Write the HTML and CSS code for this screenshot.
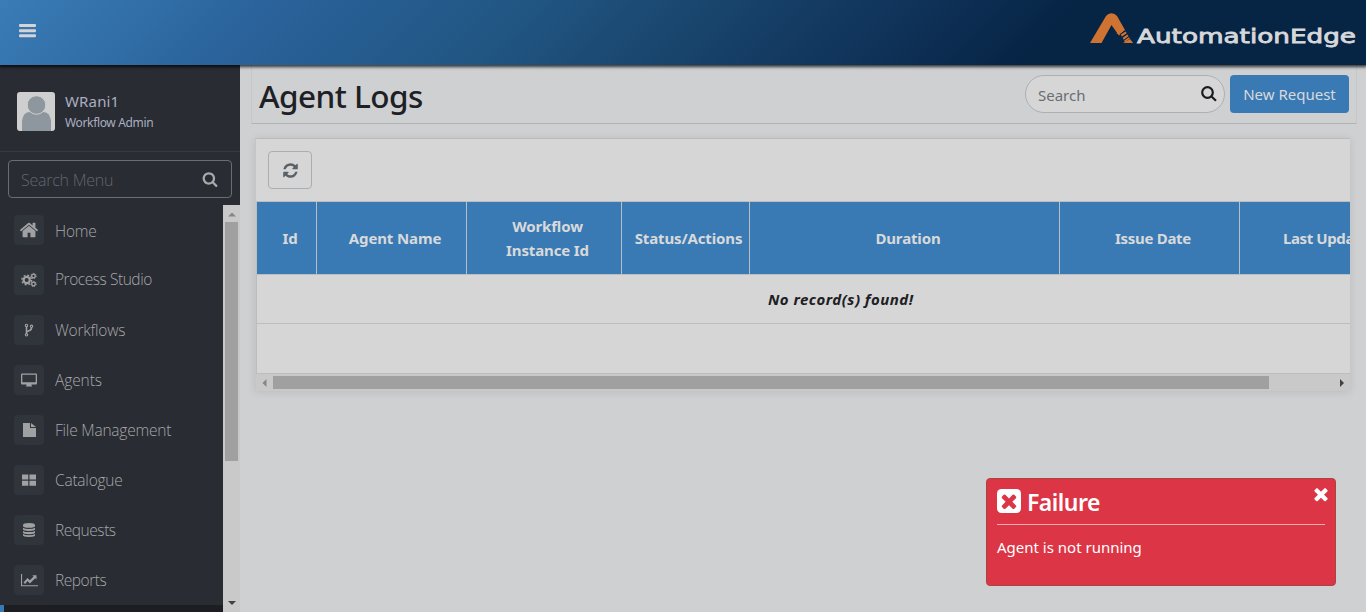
FILE: index.html
```html
<!DOCTYPE html>
<html lang="en">
<head>
<meta charset="utf-8">
<title>Agent Logs</title>
<link rel="stylesheet" href="styles.css">
</head>
<body>
<svg class="defs" width="0" height="0">
  <symbol id="search" viewBox="0 0 1792 1792"><path d="M1216 832q0-185-131.500-316.500t-316.500-131.500-316.500 131.500-131.500 316.500 131.500 316.500 316.500 131.500 316.500-131.500 131.500-316.500zm512 832q0 52-38 90t-90 38q-54 0-90-38l-343-342q-179 124-399 124-143 0-273.500-55.500t-225-150-150-225-55.500-273.500 55.500-273.500 150-225 225-150 273.500-55.500 273.500 55.500 225 150 150 225 55.500 273.500q0 220-124 399l343 343q37 37 37 90z"/></symbol>
  <symbol id="times" viewBox="0 0 1792 1792"><path d="M1490 1322q0 40-28 68l-136 136q-28 28-68 28t-68-28l-294-294-294 294q-28 28-68 28t-68-28l-136-136q-28-28-28-68t28-68l294-294-294-294q-28-28-28-68t28-68l136-136q28-28 68-28t68 28l294 294 294-294q28-28 68-28t68 28l136 136q28 28 28 68t-28 68l-294 294 294 294q28 28 28 68z"/></symbol>
</svg>
<header class="topbar">
  <svg class="bars" width="17" height="14" viewBox="0 0 17 14"><path d="M1 0h15q1 0 1 1v1q0 1-1 1H1q-1 0-1-1V1q0-1 1-1zM1 5.200h15q1 0 1 1v1q0 1-1 1H1q-1 0-1-1v-1q0-1 1-1zM1 10.200h15q1 0 1 1v1q0 1-1 1H1q-1 0-1-1v-1q0-1 1-1z"/></svg>
  <svg class="logo" width="268" height="38" viewBox="0 0 268 38">
    <path class="mark" d="M0 33 16 6Q18 3.200 21.500 3.200T27 6L35 20 30.800 23.500 30 27 21.500 15 11.500 33zM0 33M35 20 31 23.500 26 24z"/>
    <path class="gap" d="m29 25.500 1.800-2L36 20v14H29z"/>
    <path class="mark" d="m30.800 24.600 4.800-3.200 1.100 1.800-4.800 3.300zM32.700 27.700l4.700-3.300 1.100 1.900-4.800 3.500zM34.200 30.600l4.800-3.400.9 1.400L34.800 32zM33 33l7-4 3.200 4z"/>
    <text class="brand" x="47" y="33" textLength="219" lengthAdjust="spacingAndGlyphs">AutomationEdge</text>
  </svg>
</header>
<div class="shell">
  <aside class="sidebar">
    <div class="profile">
      <svg width="38" height="39" viewBox="0 0 38 39"><rect class="avatar-bg" width="38" height="39" rx="3"/><path class="avatar" d="M5 39V29Q6 20 13 20h13q7 0 8 9v10z"/><circle class="avatar ring" cx="19.500" cy="13" r="9.300"/></svg>
      <div class="who"><div class="name"><span>WRani1</span></div><div class="role"><span>Workflow Admin</span></div></div>
    </div>
    <div class="menu-search"><span>Search Menu</span><svg width="16" height="16"><use href="#search"/></svg></div>
    <div class="menu-wrap">
      <nav class="menu">
        <a class="item home"><i class="tile"><svg width="20" height="20" viewBox="0 0 1792 1792"><path d="M1472 992v480q0 26-19 45t-45 19h-384v-384h-256v384h-384q-26 0-45-19t-19-45v-480q0-1 .5-3t.5-3l575-474 575 474q1 2 1 6zm223-69l-62 74q-8 9-21 11h-3q-13 0-21-7l-692-577-692 577q-12 8-24 7-13-2-21-11l-62-74q-8-10-7-23.500t11-21.500l719-599q32-26 76-26t76 26l244 204v-195q0-14 9-23t23-9h192q14 0 23 9t9 23v408l219 182q10 8 11 21.500t-7 23.500z"/></svg></i><span>Home</span></a>
        <a class="item studio"><i class="tile"><svg width="16" height="16" viewBox="0 0 16 16"><g class="line"><circle cx="5.700" cy="8" r="3.100" stroke-width="2.200"/><circle cx="5.700" cy="8" r="4.800" stroke-width="1.500" stroke-dasharray="1.900 1.870"/><circle cx="12.500" cy="4" r="1.800" stroke-width="1.300"/><circle cx="12.500" cy="4" r="2.700" stroke-width="1" stroke-dasharray="1.300 1.127"/><circle cx="12.500" cy="12" r="1.800" stroke-width="1.300"/><circle cx="12.500" cy="12" r="2.700" stroke-width="1" stroke-dasharray="1.300 1.127"/></g></svg></i><span>Process Studio</span></a>
        <a class="item"><i class="tile"><svg width="16" height="16" viewBox="0 0 16 16"><g class="line"><circle cx="5.500" cy="3.400" r="1.200" stroke-width="1.100"/><circle cx="5.500" cy="12.800" r="1.200" stroke-width="1.100"/><circle cx="10.500" cy="4.300" r="1.200" stroke-width="1.100"/><path stroke-width="1.600" d="M5.500 4.600v7M10.500 5.500Q10.700 8 8 8.700 5.500 9.300 5.500 11"/></g></svg></i><span>Workflows</span></a>
        <a class="item agents"><i class="tile"><svg width="16" height="16" viewBox="0 0 16 16"><path fill-rule="evenodd" d="M1 1.500h14q1 0 1 1v9q0 1-1 1h-4.500v1.200h.5v.8H5v-.8h.500v-1.200H1q-1 0-1-1v-9q0-1 1-1zm.3 1.200v7.500h13.400V2.700z"/></svg></i><span>Agents</span></a>
        <a class="item"><i class="tile"><svg width="16" height="16" viewBox="0 0 16 16"><path d="M2 1h7v5h6v9H2zM10 1l5 4h-5z"/></svg></i><span>File Management</span></a>
        <a class="item"><i class="tile"><svg width="16" height="16" viewBox="0 0 16 16"><path d="M1 2.500h6.300v5H1zM8.500 2.500H15v5H8.500zM1 8.700h6.300v5H1zM8.500 8.700H15v5H8.500z"/></svg></i><span>Catalogue</span></a>
        <a class="item tight"><i class="tile"><svg width="16" height="16" viewBox="0 0 16 16"><path d="M2 3q0-2 6-2t6 2v1q0 1.800-6 1.800T2 4zM2 5.700q1.500 1.200 6 1.200t6-1.200v1.600q0 1.700-6 1.700T2 7.300zM2 8.900q1.500 1.200 6 1.200t6-1.200v1.600q0 1.700-6 1.700t-6-1.700zM2 12.100q1.500 1.200 6 1.200t6-1.200v1.200Q14 15 8 15t-6-1.700z"/></svg></i><span>Requests</span></a>
        <a class="item tight"><i class="tile"><svg width="17" height="16" viewBox="0 0 17 16"><path d="M0 2h1.100v11.200H17v1.100H0zM2.500 10.500 6.500 6l2.400 2.300 3.700-3.700L11.300 3.300H15.500v4.200l-1.300-1.300-5.300 5.200-2.300-2.300-2.500 3z"/></svg></i><span>Reports</span></a>
        <div class="next"></div>
      </nav>
      <div class="vscroll"><svg width="8" height="5" viewBox="0 0 8 5"><path class="dim" d="M0 4.500 4 .5l4 4z"/></svg><div class="vthumb"></div><svg class="down" width="8" height="5" viewBox="0 0 8 5"><path class="dark" d="M0 0h8L4 4z"/></svg></div>
    </div>
  </aside>
  <main class="content">
    <div class="heading">
      <h1><span>Agent Logs</span></h1>
      <div class="search"><span>Search</span><svg width="16" height="16" viewBox="0 0 16 16"><circle cx="6.500" cy="6.500" r="5.300"/><path d="m10.500 10.500 4.500 4.300"/></svg></div>
      <div class="new"><span>New Request</span></div>
    </div>
    <section class="card">
      <div class="tools"><div class="refresh"><svg width="17" height="17" viewBox="0 0 1792 1792"><path d="M1639 1056q0 5-1 7-64 268-268 434.500t-478 166.500q-146 0-282.500-55t-243.500-157l-129 129q-19 19-45 19t-45-19-19-45v-448q0-26 19-45t45-19h448q26 0 45 19t19 45-19 45l-137 137q71 66 161 102t187 36q134 0 250-65t186-179q11-17 53-117 8-23 30-23h192q13 0 22.500 9.500t9.500 22.500zm25-800v448q0 26-19 45t-45 19h-448q-26 0-45-19t-19-45 19-45l138-138q-148-137-349-137-134 0-250 65t-186 179q-11 17-53 117-8 23-30 23h-199q-13 0-22.500-9.500t-9.500-22.500v-7q65-268 270-434.500t480-166.500q146 0 284 55.500t245 156.500l130-129q19-19 45-19t45 19 19 45z"/></svg></div></div>
      <div class="grid">
        <div class="cols">
          <div class="th"><span>Id</span></div><div class="th"><span>Agent Name</span></div><div class="th"><span>Workflow</span><span>Instance Id</span></div><div class="th"><span>Status/Actions</span></div><div class="th"><span>Duration</span></div><div class="th"><span>Issue Date</span></div><div class="th last"><span>Last Updated</span></div>
        </div>
        <div class="empty"><span>No record(s) found!</span></div>
        <div class="blank"></div>
      </div>
      <div class="hscroll"><svg width="5" height="8" viewBox="0 0 5 8"><path class="dim" d="M4.500 0v8l-4-4z"/></svg><div class="hthumb"></div><svg class="right" width="5" height="8" viewBox="0 0 5 8"><path class="dark" d="M0 0v8l4-4z"/></svg></div>
    </section>
  </main>
</div>
<div class="toast">
  <div class="toast-head"><svg width="24" height="24" viewBox="0 0 24 24"><rect width="24" height="24" rx="4.500" fill="#fff"/><svg class="x" x="1" y="1" width="22" height="22"><use href="#times"/></svg></svg><span>Failure</span></div>
  <svg class="close" width="20" height="20"><use href="#times"/></svg>
  <p><span>Agent is not running</span></p>
</div>
</body>
</html>
```
FILE: styles.css
```css
* { box-sizing: border-box; }
body { margin: 0; width: 1366px; height: 612px; overflow: hidden; background: #cfd0d2; font-family: "Noto Sans", "Open Sans", sans-serif; font-size: 15px; color: #1d2024; display: flex; flex-direction: column; }
svg { display: block; flex: none; }
span { white-space: nowrap; }
.defs { position: absolute; }
.topbar { height: 65px; flex: none; position: relative; z-index: 2; background: linear-gradient(135deg, #3a7cb6 0%, #2a629a 20%, #215683 37%, #19456d 50%, #10335a 64%, #062444 76%, #062444 100%); box-shadow: 0 1px 3px 1px rgba(0,0,0,.75); display: flex; justify-content: space-between; align-items: flex-start; padding: 10px 8px 0 19px; }
.bars { fill: #d4d4d6; margin-top: 14px; }
.mark { fill: #cf7333; }
.gap { fill: #062444; }
.brand { fill: #d7d8da; font: 19px "DejaVu Sans", sans-serif; stroke: #d7d8da; stroke-width: .8px; }
.shell { display: flex; flex: 1; min-height: 0; }
.sidebar { width: 240px; background: #292c33; display: flex; flex-direction: column; flex: none; }
.profile { height: 87px; flex: none; border-bottom: 1px solid #363940; padding: 26px 17px 0; display: flex; gap: 10px; color: #a9afc0; }
.profile svg { margin-top: 1px; }
.avatar-bg { fill: #cfcfcf; }
.avatar { fill: #8f979e; }
.ring { stroke: #cfcfcf; stroke-width: 1; }
.name { font-size: 15px; line-height: 20px; letter-spacing: .15px; }
.role { font-size: 12px; line-height: 24px; letter-spacing: -.35px; }
.menu-search { height: 38px; flex: none; margin: 8px 8px 7px; border: 1px solid #6b6d70; border-radius: 4px; display: flex; align-items: center; justify-content: space-between; padding: 0 13px 0 12px; color: #62676b; font: 300 16px "Open Sans", sans-serif; letter-spacing: -.25px; }
.menu-search span { padding-top: 2px; }
.menu-search svg { fill: #a9a9aa; }
.menu-wrap { flex: 1; display: flex; min-height: 0; }
.menu { flex: 1; padding-top: 10px; overflow: hidden; font: 300 15.500px/30px "Open Sans", sans-serif; letter-spacing: -.22px; color: #a6a7a9; }
.item { height: 30px; margin-bottom: 20px; padding-left: 14px; display: flex; gap: 11px; }
.home span { padding-top: 1px; }
.studio { letter-spacing: -.45px; }
.studio span { margin-top: -1px; }
.agents { letter-spacing: -.1px; }
.tight { letter-spacing: -.45px; }
.tile { width: 30px; height: 30px; border-radius: 4px; background: #30343b; display: flex; align-items: center; justify-content: center; fill: #a0a1a3; }
.line { fill: none; stroke: #a0a1a3; }
.next { height: 10px; margin-top: -10px; background: #1c1e21; border-left: 4px solid #3a7ab4; }
.vscroll { width: 17px; background: #c9c9c9; padding-top: 7px; display: flex; flex-direction: column; align-items: center; }
.vthumb { width: 13px; height: 239px; margin-top: 5px; background: #a0a0a0; }
.down { margin-top: auto; margin-bottom: 6px; }
.dim { fill: #878787; }
.dark { fill: #414141; }
.content { flex: 1; min-width: 0; padding: 0 9px 0 11px; }
.heading { height: 59px; border-left: 1px solid #c6c7c9; border-right: 1px solid #c6c7c9; border-bottom: 1px solid #b0b3b6; display: flex; align-items: flex-start; padding: 10px 7px 0; }
h1 { margin: 0; flex: 1; font-weight: 500; font-size: 31.500px; line-height: 42px; letter-spacing: -.55px; }
.search { width: 200px; height: 38px; border: 1px solid #abb0b5; border-radius: 19px; background: #d6d6d6; display: flex; align-items: center; justify-content: space-between; padding: 0 7px 0 12px; margin-right: 5px; color: #686e73; font-size: 15px; }
.search svg { fill: none; stroke: #191b1e; stroke-width: 2.200; }
.search span { padding-top: 2px; }
.new { width: 119px; height: 38px; border-radius: 4px; background: #3a7ab4; color: #d8d9da; text-align: center; line-height: 38px; }
.card { width: 1095px; margin: 14px 0 0 4px; border-top: 1px solid #b9bbbd; border-left: 1px solid #c4c5c7; background: #d6d6d6; box-shadow: 0 1px 8px rgba(0,0,0,.1); }
.tools { height: 62px; padding: 12px 0 0 12px; }
.refresh { width: 44px; height: 38px; border: 1px solid #a9aeb3; border-radius: 4px; display: flex; align-items: center; justify-content: center; fill: #596066; }
.grid { overflow: hidden; border-top: 1px solid #bcbdbe; border-left: 1px solid #bcbdbe; }
.cols { width: 1243px; height: 73px; display: grid; grid-template-columns: 60px 150px 155px 128px 310px 180px 180px; background: #3a7ab4; color: #d8d9da; font-weight: 700; letter-spacing: -.13px; border-bottom: 1px solid #bcbdbe; }
.th { border-right: 1px solid #b9bec3; display: flex; flex-direction: column; align-items: center; justify-content: center; line-height: 24px; padding: 0 0 0 7px; }
.th:nth-child(4) { padding-left: 6px; }
.th:nth-child(6) { letter-spacing: -.3px; }
.th.last { align-items: flex-start; padding-left: 43px; letter-spacing: -.4px; }
.empty { height: 49px; border-bottom: 1px solid #bcbdbe; padding-left: 511px; line-height: 49px; font-weight: 700; font-style: italic; letter-spacing: .48px; }
.blank { height: 50px; border-bottom: 1px solid #bcbdbe; }
.hscroll { height: 17px; background: #c9c9c9; display: flex; align-items: center; padding: 0 5px 0 6px; }
.hthumb { width: 996px; height: 13px; margin-left: 6px; background: #a0a0a0; }
.right { margin-left: auto; }
.toast { position: absolute; left: 986px; top: 478px; width: 350px; height: 108px; background: #dc3545; border: 1px solid #a94442; border-radius: 4px; color: #fff; padding: 10px; }
.toast-head { height: 36px; width: 328px; border-bottom: 1px solid #f2adb4; display: flex; gap: 6px; font-size: 23px; font-weight: 600; line-height: 26px; letter-spacing: -.5px; }
.x { fill: #dc3545; }
.close { position: absolute; right: 4px; top: 5px; fill: #fff; }
.toast p { margin: 10px 0 0; line-height: 24px; }
```
